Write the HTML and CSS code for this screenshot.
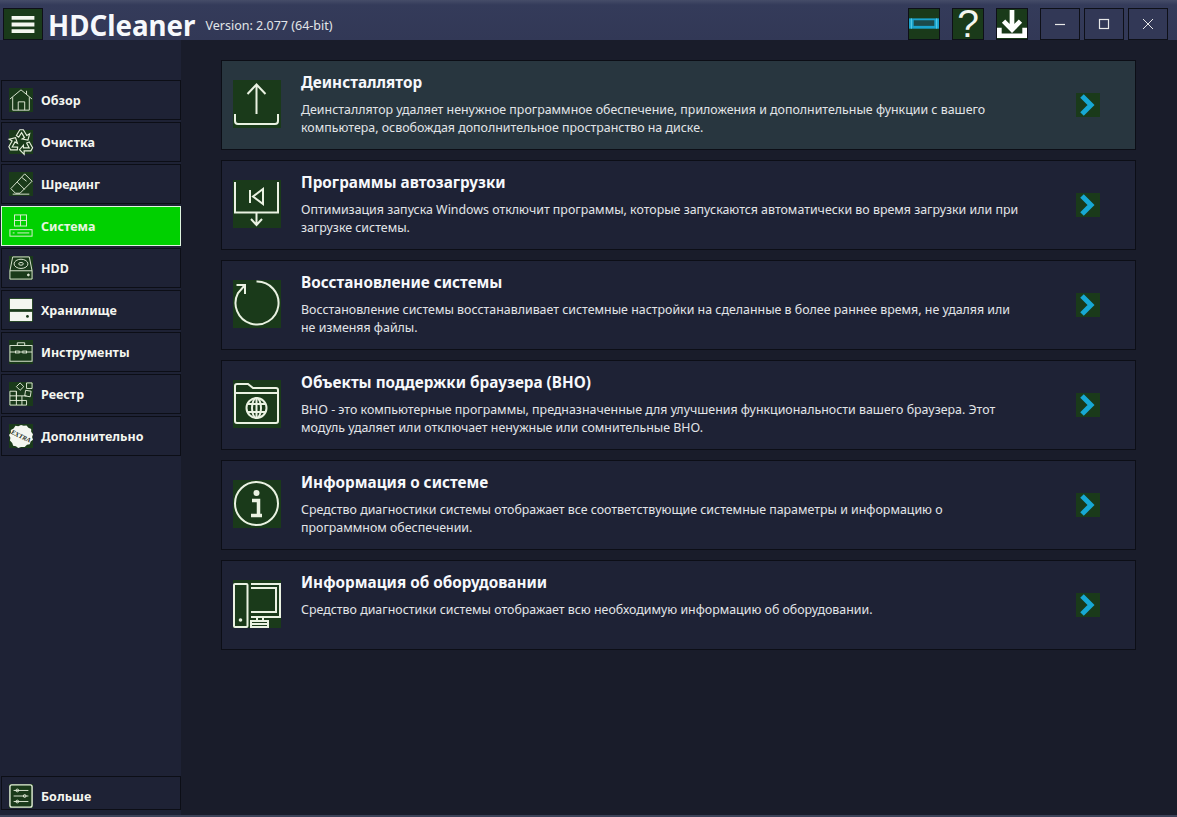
FILE: index.html
```html
<!DOCTYPE html>
<html lang="ru">
<head>
<meta charset="utf-8">
<title>HDCleaner</title>
<link rel="stylesheet" href="styles.css">
</head>
<body>
<div class="window">
  <header class="titlebar">
    <button class="menu-btn" aria-label="Меню">
      <svg viewBox="0 0 40 32" width="39" height="31"><path d="M8 9h24M8 16h24M8 23h24" class="w4"/></svg>
    </button>
    <span class="brand">HDCleaner</span>
    <span class="version">Version: 2.077 (64-bit)</span>
    <div class="title-actions">
      <button class="tool-btn"><svg viewBox="0 0 32 32" width="32" height="32"><rect x="0" y="10" width="32" height="11" fill="#1aa3cc"/><rect x="5" y="12" width="22" height="6" fill="#1c4a4a"/><path d="M2.500 10v11M29.500 10v11" stroke="#5fd0ea" stroke-width="1"/></svg></button>
      <button class="tool-btn help">?</button>
      <button class="tool-btn"><svg viewBox="0 0 32 32" width="32" height="32"><path d="M16 1v21M7 13l9 9 9-9" fill="none" stroke="#fff" stroke-width="5"/><path d="M2.500 20v8.500h27V20" fill="none" stroke="#fff" stroke-width="5"/></svg></button>
      <div class="win-btns">
        <button class="win-btn"><svg viewBox="0 0 12 12" width="12" height="12"><path d="M1 6.500h10" stroke="#e8e8e8" stroke-width="1.200"/></svg></button>
        <button class="win-btn"><svg viewBox="0 0 12 12" width="12" height="12"><rect x="1.500" y="1.500" width="9" height="9" fill="none" stroke="#e8e8e8" stroke-width="1.200"/></svg></button>
        <button class="win-btn"><svg viewBox="0 0 12 12" width="12" height="12"><path d="M1 1l10 10M11 1L1 11" stroke="#e8e8e8" stroke-width="1"/></svg></button>
      </div>
    </div>
  </header>
  <div class="body">
    <nav class="sidebar">
      <ul class="nav-list">
        <li class="nav-item"><span class="nav-ico"><svg viewBox="0 0 26 26" class="s1"><path d="M1 12L13 2l12 10M4 10v14h18V10M10 24v-9h7v9M19 3v4"/></svg></span>Обзор</li>
        <li class="nav-item"><span class="nav-ico"><svg viewBox="0 0 26 26" class="s1"><g transform="translate(13 13.500) scale(1.250) translate(-13 -14)"><path d="M9 8L12 3H15L18 8L20.500 6.500L19 12L14 11L16 9.800L13.500 5.500L11 9.500Z"/><path d="M9 8L12 3H15L18 8L20.500 6.500L19 12L14 11L16 9.800L13.500 5.500L11 9.500Z" transform="rotate(120 13 14)"/><path d="M9 8L12 3H15L18 8L20.500 6.500L19 12L14 11L16 9.800L13.500 5.500L11 9.500Z" transform="rotate(240 13 14)"/></g></svg></span>Очистка</li>
        <li class="nav-item"><span class="nav-ico"><svg viewBox="0 0 26 26" class="s1"><path d="M17 2l8 8-13 13H7l-5-5zM9 11l8 8M14 6l5 4M4 24h18"/></svg></span>Шрединг</li>
        <li class="nav-item active"><span class="nav-ico"><svg viewBox="0 0 26 26" class="s1"><rect x="6" y="1" width="13" height="12"/><path d="M12.500 1v12M6 7h13"/><rect x="1" y="17" width="24" height="7"/><path d="M4 20.500h2M9 20.500h13"/></svg></span>Система</li>
        <li class="nav-item"><span class="nav-ico"><svg viewBox="0 0 26 26" class="s1"><path d="M4 1h18l3 15v9H1v-9zM1 16h24"/><ellipse cx="13" cy="8.500" rx="7.500" ry="5"/><ellipse cx="13" cy="8.500" rx="2.500" ry="1.500"/><circle cx="21" cy="20.500" r="1" class="dot"/></svg></span>HDD</li>
        <li class="nav-item"><span class="nav-ico"><svg viewBox="0 0 26 26"><rect x="1" y="1" width="24" height="11" fill="#f4f6f0"/><rect x="1" y="15" width="24" height="10" fill="#f4f6f0"/><circle cx="20" cy="20" r="1.500" fill="#1a3a1a"/></svg></span>Хранилище</li>
        <li class="nav-item"><span class="nav-ico"><svg viewBox="0 0 26 26" class="s1"><rect x="1" y="6" width="24" height="17"/><path d="M9 6V3h8v3M1 13h6M11 13h4M19 13h6"/><rect x="7" y="12" width="4" height="2"/><rect x="15" y="12" width="4" height="2"/></svg></span>Инструменты</li>
        <li class="nav-item"><span class="nav-ico"><svg viewBox="0 0 26 26" class="s1"><path d="M1 10h7v15H1zM1 15h18M1 20h18v5H8M8 15v5M14 15v10M8 10v5"/><path d="M12 1l4 4-4 4-4-4zM19 1h6v6h-6zM18 9l6 1-1 6-6-1z"/></svg></span>Реестр</li>
        <li class="nav-item"><span class="nav-ico"><svg viewBox="0 0 26 26"><path d="M13 1l3 1 3-.5 2 2.500 3 1.500 0 3 2 2.500-1 3 1 3-2.500 2-1 3-3 .5L17 25l-4 0-3 1-2.500-2-3-.5-1-3L1 18l.5-3L0 12l2-2.500 0-3L5 5l2-3 3 .5z" fill="#f4f6f0"/><text x="13" y="15.500" class="extra" transform="rotate(25 13 13)">EXTRA</text></svg></span>Дополнительно</li>
      </ul>
      <div class="nav-item more"><span class="nav-ico"><svg viewBox="0 0 26 26" class="s1"><rect x="1" y="1" width="24" height="24" rx="2" stroke-width="1.500"/><path d="M5 7h16M5 13h16M5 19h16"/><circle cx="9" cy="7" r="1.500"/><circle cx="17" cy="13" r="1.500"/><circle cx="9" cy="19" r="1.500"/></svg></span>Больше</div>
    </nav>
    <main class="content">
      <article class="card current">
        <div class="card-ico"><svg viewBox="0 0 48 48" class="s2"><path d="M23.500 34V4.500M14.500 14l9-9.500 9 9.500"/><path d="M2 34v7q0 3 3 3h37q3 0 3-3v-7"/></svg></div>
        <div class="card-text"><h2>Деинсталлятор</h2><p>Деинсталлятор удаляет ненужное программное обеспечение, приложения и дополнительные функции с вашего компьютера, освобождая дополнительное пространство на диске.</p></div>
        <span class="arrow"><svg viewBox="0 0 24 24" width="24" height="24"><path d="M6 3l9 9-9 9" fill="none" stroke="#17a8d4" stroke-width="5"/></svg></span>
      </article>
      <article class="card">
        <div class="card-ico"><svg viewBox="0 0 48 48" class="s2"><path d="M2 2v30.500h43V2M23.500 32.500V45M18 39l5.500 6 5.500-6M17 10v13"/><path d="M30 9v15l-10-7.500z"/></svg></div>
        <div class="card-text"><h2>Программы автозагрузки</h2><p>Оптимизация запуска Windows отключит программы, которые запускаются автоматически во время загрузки или при загрузке системы.</p></div>
        <span class="arrow"><svg viewBox="0 0 24 24" width="24" height="24"><path d="M6 3l9 9-9 9" fill="none" stroke="#17a8d4" stroke-width="5"/></svg></span>
      </article>
      <article class="card">
        <div class="card-ico"><svg viewBox="0 0 48 48" class="s2"><path d="M23.500 1.500A21.500 21.500 0 1 1 5 13L12 5M3.500 5H12v9"/></svg></div>
        <div class="card-text"><h2>Восстановление системы</h2><p>Восстановление системы восстанавливает системные настройки на сделанные в более раннее время, не удаляя или не изменяя файлы.</p></div>
        <span class="arrow"><svg viewBox="0 0 24 24" width="24" height="24"><path d="M6 3l9 9-9 9" fill="none" stroke="#17a8d4" stroke-width="5"/></svg></span>
      </article>
      <article class="card">
        <div class="card-ico"><svg viewBox="0 0 48 48" class="s2"><path d="M2 13V6q0-2 2-2h11l5 4h23q2 0 2 2v31q0 2-2 2H4q-2 0-2-2zM2 13h43"/><circle cx="23.500" cy="28" r="10"/><ellipse cx="23.500" cy="28" rx="4.500" ry="10"/><path d="M14.500 24h18M14.500 32h18M23.500 18v20"/></svg></div>
        <div class="card-text"><h2>Объекты поддержки браузера (BHO)</h2><p>BHO - это компьютерные программы, предназначенные для улучшения функциональности вашего браузера. Этот модуль удаляет или отключает ненужные или сомнительные BHO.</p></div>
        <span class="arrow"><svg viewBox="0 0 24 24" width="24" height="24"><path d="M6 3l9 9-9 9" fill="none" stroke="#17a8d4" stroke-width="5"/></svg></span>
      </article>
      <article class="card">
        <div class="card-ico"><svg viewBox="0 0 48 48" class="s2"><circle cx="23.500" cy="23.500" r="21.500"/><circle cx="23.500" cy="13" r="3" class="solid"/><path d="M19 20.500h6.500V35M18 35.500h11" class="thick"/></svg></div>
        <div class="card-text"><h2>Информация о системе</h2><p>Средство диагностики системы отображает все соответствующие системные параметры и информацию о программном обеспечении.</p></div>
        <span class="arrow"><svg viewBox="0 0 24 24" width="24" height="24"><path d="M6 3l9 9-9 9" fill="none" stroke="#17a8d4" stroke-width="5"/></svg></span>
      </article>
      <article class="card">
        <div class="card-ico"><svg viewBox="0 0 48 48" class="s2"><rect x="1" y="4" width="13.500" height="43" rx="1"/><circle cx="7.500" cy="40" r="1.800" class="solid"/><path d="M18 4h29v33H18M18 8h25v24H18M24 37v4M30 37v4"/><path d="M18 41h17v6H18zM18 44h17"/></svg></div>
        <div class="card-text"><h2>Информация об оборудовании</h2><p>Средство диагностики системы отображает всю необходимую информацию об оборудовании.</p></div>
        <span class="arrow"><svg viewBox="0 0 24 24" width="24" height="24"><path d="M6 3l9 9-9 9" fill="none" stroke="#17a8d4" stroke-width="5"/></svg></span>
      </article>
    </main>
  </div>
</div>
</body>
</html>
```
FILE: styles.css
```css
* { box-sizing: border-box; }
html, body { margin: 0; height: 100%; }
body { background: #191c2a; font-family: "Noto Sans", "Open Sans", sans-serif; color: #f4f6f0; overflow: hidden; }
button { padding: 0; margin: 0; font: inherit; color: inherit; cursor: pointer; }
.window { width: 1177px; height: 817px; display: flex; flex-direction: column; border-bottom: 2px solid #3c4258; }
.titlebar { height: 40px; flex: none; display: flex; align-items: flex-start; padding: 8px 9px 0 3px; background: linear-gradient(#454c68 0, #343b5a 5px, #323856 100%); }
.menu-btn { width: 40px; height: 32px; background: #1a3a1a; border: 1px solid #0e1018; display: flex; align-items: center; justify-content: center; }
.w4 { fill: none; stroke: #f4f6f0; stroke-width: 4; }
.brand { font-size: 27.700px; line-height: 34px; font-weight: 700; margin-left: 5px; color: #f6f8fc; }
.version { font-size: 12.500px; line-height: 35px; margin-left: 10px; color: #e2e5e8; }
.title-actions { margin-left: auto; display: flex; gap: 12px; }
.tool-btn { width: 32px; height: 32px; background: #1a3a1a; border: 1px solid #0e1018; display: flex; align-items: center; justify-content: center; overflow: visible; }
.help { font-family: "Liberation Sans", sans-serif; font-size: 39px; line-height: 32px; color: #f4f6f0; }
.win-btns { display: flex; gap: 4px; }
.win-btn { width: 40px; height: 32px; background: #323856; border: 1px solid #0e1018; display: flex; align-items: center; justify-content: center; }
.body { flex: 1; display: flex; min-height: 0; }
.sidebar { width: 181px; flex: none; background: #1e2235; display: flex; flex-direction: column; padding: 40px 0 5px 1px; }
.nav-list { list-style: none; margin: 0; padding: 0; display: flex; flex-direction: column; gap: 2px; flex: 1; }
.nav-item { height: 40px; width: 180px; display: flex; align-items: center; background: #1e2235; border: 1px solid #0c0e16; font-size: 12.500px; font-weight: 700; color: #f4f6f0; }
.nav-item.active { background: #00d000; border-color: #dff5df; color: #e8f5e0; }
.more { height: 34px; padding-top: 6px; }
.nav-ico { width: 24px; height: 24px; margin: 0 8px 0 7px; background: #1a3a1a; display: block; flex: none; }
.active .nav-ico { background: #00d000; }
.nav-ico svg { width: 24px; height: 24px; display: block; overflow: visible; }
.s1 { fill: none; stroke: #e6efdc; stroke-width: 1; }
.s1 .dot { fill: #e6efdc; }
.extra { font-family: "Liberation Serif", serif; font-size: 7px; font-weight: 700; font-style: italic; fill: #1a2a1a; text-anchor: middle; }
.content { flex: 1; padding: 20px 41px 0 40px; display: flex; flex-direction: column; gap: 10px; }
.card { height: 90px; flex: none; display: flex; align-items: flex-start; background: #1e2235; border: 1px solid #0c0e16; }
.card.current { background: #28363f; }
.card-ico { width: 48px; height: 48px; margin: 19px 20px 0 11px; background: #1a3a1a; flex: none; }
.s2 { width: 48px; height: 48px; display: block; overflow: visible; fill: none; stroke: #eaf2e2; stroke-width: 2; }
.s2 .solid { fill: #eaf2e2; stroke: none; }
.s2 .thick { stroke-width: 3.500; }
.card-text { width: 718px; flex: none; padding-top: 10px; }
.card h2 { margin: 0; font-size: 15.300px; line-height: 22px; font-weight: 700; color: #f6f8fc; }
.card p { margin: 8px 0 0; font-size: 12.400px; line-height: 18px; color: #e2e5e8; }
.arrow { width: 24px; height: 24px; margin: 32px 35px 0 auto; background: #1a3a1a; flex: none; }
.arrow svg { display: block; }
```
